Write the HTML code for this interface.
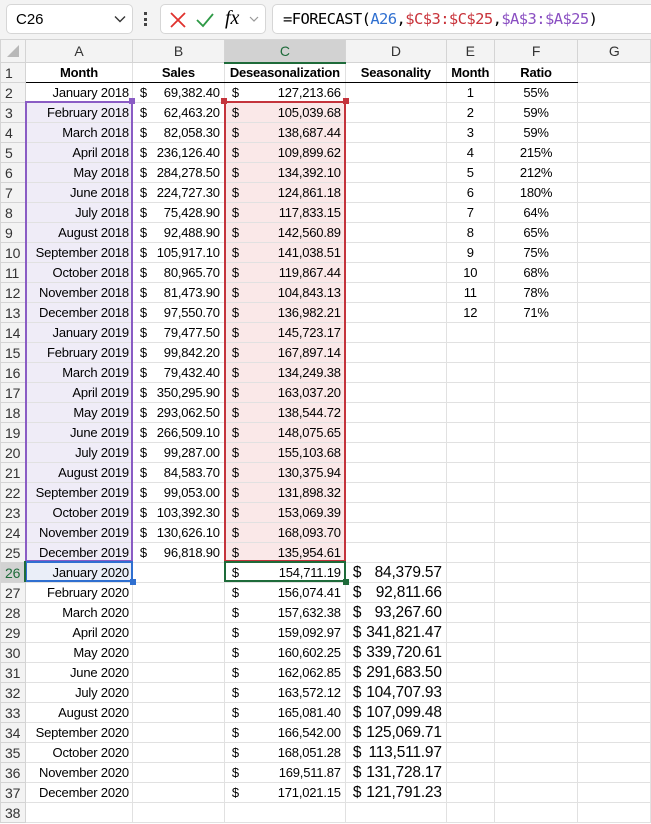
<!DOCTYPE html>
<html><head><meta charset="utf-8"><style>
*{box-sizing:border-box;margin:0;padding:0}
body{width:651px;height:824px;background:#fff;font-family:"Liberation Sans",sans-serif;font-size:13px;color:#000;position:relative;overflow:hidden}
.top{position:absolute;left:0;top:0;width:651px;height:40px;background:#f3f3f3}
.nb{position:absolute;left:6px;top:4px;width:127px;height:30px;background:#fff;border:1px solid #d6d6d6;border-radius:5px;font-size:15px;padding:6px 0 0 9px}
.ib{position:absolute;left:128px;top:4px;width:85px;height:30px;background:#fff;border:1px solid #d6d6d6;border-radius:5px}
.fb{position:absolute;left:218px;top:4px;width:440px;height:30px;background:#fff;border:1px solid #d6d6d6;border-radius:5px;font-family:"DejaVu Sans Mono","Liberation Mono",monospace;font-size:15.5px;padding:5px 0 0 10px;letter-spacing:-0.6px;white-space:nowrap}
table{position:absolute;left:0;top:39px;border-collapse:collapse;table-layout:fixed}
td{height:20px;border:1px solid #e1e1e1;padding:0 3px;white-space:nowrap;overflow:hidden;line-height:18px;letter-spacing:-0.2px}
tr.h td{height:22px;background:#f3f3f3;text-align:center;font-size:14px;color:#333;border-color:#d4d4d4}
td.r{background:#f3f3f3;font-size:14px;color:#333;text-align:left;padding-left:4px;border-color:#d4d4d4}
.a{text-align:right}
.c{text-align:center}
b{font-weight:bold}
.m{display:flex;justify-content:space-between;padding:0 1px 0 4px}
.d{font-size:15.5px}
.pa{background:#efecf7}
.pc{background:#fae8e8}
</style></head><body>
<div class="top">
<div class="nb">C26<svg style="position:absolute;right:6px;top:10px" width="12" height="8"><path d="M1 1.5 L6 6.5 L11 1.5" stroke="#333" fill="none" stroke-width="1.4"/></svg></div>
<div style="position:absolute;left:144px;top:12px;width:3px;height:16px"><div style="width:3px;height:3px;background:#444;margin-bottom:2.5px"></div><div style="width:3px;height:3px;background:#444;margin-bottom:2.5px"></div><div style="width:3px;height:3px;background:#444"></div></div>
<div class="ib" style="left:160px;width:106px">
<svg style="position:absolute;left:8px;top:6px" width="18" height="18"><path d="M2 2L16 16M16 2L2 16" stroke="#e0312d" stroke-width="1.8"/></svg>
<svg style="position:absolute;left:34px;top:6px" width="20" height="18"><path d="M2 9L8 15L18 3" stroke="#2e9a46" stroke-width="1.8" fill="none"/></svg>
<span style="position:absolute;left:64px;top:2px;font-family:'Liberation Serif',serif;font-style:italic;font-size:20px">fx</span>
<svg style="position:absolute;left:88px;top:11px" width="10" height="7"><path d="M1 1L5 5L9 1" stroke="#999" fill="none" stroke-width="1.2"/></svg>
</div>
<div class="fb" style="left:272px">=FORECAST(<span style="color:#2f6fd0">A26</span>,<span style="color:#c8323a">$C$3:$C$25</span>,<span style="color:#8a4fc2">$A$3:$A$25</span>)</div>
</div>
<table>
<colgroup><col style="width:25px"><col style="width:107px"><col style="width:92px"><col style="width:121px"><col style="width:101px"><col style="width:48px"><col style="width:84px"><col style="width:73px"></colgroup>
<tr class="h"><td style="background:#f3f3f3"><svg width="14" height="14" style="margin-top:4px"><path d="M13 1L13 13L1 13Z" fill="#b8b8b8"/></svg></td><td>A</td><td>B</td><td style="background:#d2d2d2;color:#1e6b3a;border-bottom:2px solid #1e6b3a">C</td><td>D</td><td>E</td><td>F</td><td>G</td></tr>
<tr><td class="r">1</td><td class="c" style="border-bottom:1px solid #000"><b>Month</b></td><td class="c" style="border-bottom:1px solid #000"><b>Sales</b></td><td class="c" style="border-bottom:1px solid #000"><b>Deseasonalization</b></td><td class="c" style="border-bottom:1px solid #000"><b>Seasonality</b></td><td class="c" style="border-bottom:1px solid #000"><b>Month</b></td><td class="c" style="border-bottom:1px solid #000"><b>Ratio</b></td><td></td></tr>
<tr><td class="r">2</td><td class="a">January 2018</td><td><div class="m"><span>$</span><span>69,382.40</span></div></td><td><div class="m"><span>$</span><span>127,213.66</span></div></td><td></td><td class="c">1</td><td class="c">55%</td><td></td></tr>
<tr><td class="r">3</td><td class="a pa">February 2018</td><td><div class="m"><span>$</span><span>62,463.20</span></div></td><td class="pc"><div class="m"><span>$</span><span>105,039.68</span></div></td><td></td><td class="c">2</td><td class="c">59%</td><td></td></tr>
<tr><td class="r">4</td><td class="a pa">March 2018</td><td><div class="m"><span>$</span><span>82,058.30</span></div></td><td class="pc"><div class="m"><span>$</span><span>138,687.44</span></div></td><td></td><td class="c">3</td><td class="c">59%</td><td></td></tr>
<tr><td class="r">5</td><td class="a pa">April 2018</td><td><div class="m"><span>$</span><span>236,126.40</span></div></td><td class="pc"><div class="m"><span>$</span><span>109,899.62</span></div></td><td></td><td class="c">4</td><td class="c">215%</td><td></td></tr>
<tr><td class="r">6</td><td class="a pa">May 2018</td><td><div class="m"><span>$</span><span>284,278.50</span></div></td><td class="pc"><div class="m"><span>$</span><span>134,392.10</span></div></td><td></td><td class="c">5</td><td class="c">212%</td><td></td></tr>
<tr><td class="r">7</td><td class="a pa">June 2018</td><td><div class="m"><span>$</span><span>224,727.30</span></div></td><td class="pc"><div class="m"><span>$</span><span>124,861.18</span></div></td><td></td><td class="c">6</td><td class="c">180%</td><td></td></tr>
<tr><td class="r">8</td><td class="a pa">July 2018</td><td><div class="m"><span>$</span><span>75,428.90</span></div></td><td class="pc"><div class="m"><span>$</span><span>117,833.15</span></div></td><td></td><td class="c">7</td><td class="c">64%</td><td></td></tr>
<tr><td class="r">9</td><td class="a pa">August 2018</td><td><div class="m"><span>$</span><span>92,488.90</span></div></td><td class="pc"><div class="m"><span>$</span><span>142,560.89</span></div></td><td></td><td class="c">8</td><td class="c">65%</td><td></td></tr>
<tr><td class="r">10</td><td class="a pa">September 2018</td><td><div class="m"><span>$</span><span>105,917.10</span></div></td><td class="pc"><div class="m"><span>$</span><span>141,038.51</span></div></td><td></td><td class="c">9</td><td class="c">75%</td><td></td></tr>
<tr><td class="r">11</td><td class="a pa">October 2018</td><td><div class="m"><span>$</span><span>80,965.70</span></div></td><td class="pc"><div class="m"><span>$</span><span>119,867.44</span></div></td><td></td><td class="c">10</td><td class="c">68%</td><td></td></tr>
<tr><td class="r">12</td><td class="a pa">November 2018</td><td><div class="m"><span>$</span><span>81,473.90</span></div></td><td class="pc"><div class="m"><span>$</span><span>104,843.13</span></div></td><td></td><td class="c">11</td><td class="c">78%</td><td></td></tr>
<tr><td class="r">13</td><td class="a pa">December 2018</td><td><div class="m"><span>$</span><span>97,550.70</span></div></td><td class="pc"><div class="m"><span>$</span><span>136,982.21</span></div></td><td></td><td class="c">12</td><td class="c">71%</td><td></td></tr>
<tr><td class="r">14</td><td class="a pa">January 2019</td><td><div class="m"><span>$</span><span>79,477.50</span></div></td><td class="pc"><div class="m"><span>$</span><span>145,723.17</span></div></td><td></td><td></td><td></td><td></td></tr>
<tr><td class="r">15</td><td class="a pa">February 2019</td><td><div class="m"><span>$</span><span>99,842.20</span></div></td><td class="pc"><div class="m"><span>$</span><span>167,897.14</span></div></td><td></td><td></td><td></td><td></td></tr>
<tr><td class="r">16</td><td class="a pa">March 2019</td><td><div class="m"><span>$</span><span>79,432.40</span></div></td><td class="pc"><div class="m"><span>$</span><span>134,249.38</span></div></td><td></td><td></td><td></td><td></td></tr>
<tr><td class="r">17</td><td class="a pa">April 2019</td><td><div class="m"><span>$</span><span>350,295.90</span></div></td><td class="pc"><div class="m"><span>$</span><span>163,037.20</span></div></td><td></td><td></td><td></td><td></td></tr>
<tr><td class="r">18</td><td class="a pa">May 2019</td><td><div class="m"><span>$</span><span>293,062.50</span></div></td><td class="pc"><div class="m"><span>$</span><span>138,544.72</span></div></td><td></td><td></td><td></td><td></td></tr>
<tr><td class="r">19</td><td class="a pa">June 2019</td><td><div class="m"><span>$</span><span>266,509.10</span></div></td><td class="pc"><div class="m"><span>$</span><span>148,075.65</span></div></td><td></td><td></td><td></td><td></td></tr>
<tr><td class="r">20</td><td class="a pa">July 2019</td><td><div class="m"><span>$</span><span>99,287.00</span></div></td><td class="pc"><div class="m"><span>$</span><span>155,103.68</span></div></td><td></td><td></td><td></td><td></td></tr>
<tr><td class="r">21</td><td class="a pa">August 2019</td><td><div class="m"><span>$</span><span>84,583.70</span></div></td><td class="pc"><div class="m"><span>$</span><span>130,375.94</span></div></td><td></td><td></td><td></td><td></td></tr>
<tr><td class="r">22</td><td class="a pa">September 2019</td><td><div class="m"><span>$</span><span>99,053.00</span></div></td><td class="pc"><div class="m"><span>$</span><span>131,898.32</span></div></td><td></td><td></td><td></td><td></td></tr>
<tr><td class="r">23</td><td class="a pa">October 2019</td><td><div class="m"><span>$</span><span>103,392.30</span></div></td><td class="pc"><div class="m"><span>$</span><span>153,069.39</span></div></td><td></td><td></td><td></td><td></td></tr>
<tr><td class="r">24</td><td class="a pa">November 2019</td><td><div class="m"><span>$</span><span>130,626.10</span></div></td><td class="pc"><div class="m"><span>$</span><span>168,093.70</span></div></td><td></td><td></td><td></td><td></td></tr>
<tr><td class="r">25</td><td class="a pa">December 2019</td><td><div class="m"><span>$</span><span>96,818.90</span></div></td><td class="pc"><div class="m"><span>$</span><span>135,954.61</span></div></td><td></td><td></td><td></td><td></td></tr>
<tr><td class="r" style="background:#d2d2d2;color:#1e6b3a">26</td><td class="a" style="background:#eaeef8">January 2020</td><td></td><td><div class="m"><span>$</span><span>154,711.19</span></div></td><td class="d"><div class="m"><span>$</span><span>84,379.57</span></div></td><td></td><td></td><td></td></tr>
<tr><td class="r">27</td><td class="a">February 2020</td><td></td><td><div class="m"><span>$</span><span>156,074.41</span></div></td><td class="d"><div class="m"><span>$</span><span>92,811.66</span></div></td><td></td><td></td><td></td></tr>
<tr><td class="r">28</td><td class="a">March 2020</td><td></td><td><div class="m"><span>$</span><span>157,632.38</span></div></td><td class="d"><div class="m"><span>$</span><span>93,267.60</span></div></td><td></td><td></td><td></td></tr>
<tr><td class="r">29</td><td class="a">April 2020</td><td></td><td><div class="m"><span>$</span><span>159,092.97</span></div></td><td class="d"><div class="m"><span>$</span><span>341,821.47</span></div></td><td></td><td></td><td></td></tr>
<tr><td class="r">30</td><td class="a">May 2020</td><td></td><td><div class="m"><span>$</span><span>160,602.25</span></div></td><td class="d"><div class="m"><span>$</span><span>339,720.61</span></div></td><td></td><td></td><td></td></tr>
<tr><td class="r">31</td><td class="a">June 2020</td><td></td><td><div class="m"><span>$</span><span>162,062.85</span></div></td><td class="d"><div class="m"><span>$</span><span>291,683.50</span></div></td><td></td><td></td><td></td></tr>
<tr><td class="r">32</td><td class="a">July 2020</td><td></td><td><div class="m"><span>$</span><span>163,572.12</span></div></td><td class="d"><div class="m"><span>$</span><span>104,707.93</span></div></td><td></td><td></td><td></td></tr>
<tr><td class="r">33</td><td class="a">August 2020</td><td></td><td><div class="m"><span>$</span><span>165,081.40</span></div></td><td class="d"><div class="m"><span>$</span><span>107,099.48</span></div></td><td></td><td></td><td></td></tr>
<tr><td class="r">34</td><td class="a">September 2020</td><td></td><td><div class="m"><span>$</span><span>166,542.00</span></div></td><td class="d"><div class="m"><span>$</span><span>125,069.71</span></div></td><td></td><td></td><td></td></tr>
<tr><td class="r">35</td><td class="a">October 2020</td><td></td><td><div class="m"><span>$</span><span>168,051.28</span></div></td><td class="d"><div class="m"><span>$</span><span>113,511.97</span></div></td><td></td><td></td><td></td></tr>
<tr><td class="r">36</td><td class="a">November 2020</td><td></td><td><div class="m"><span>$</span><span>169,511.87</span></div></td><td class="d"><div class="m"><span>$</span><span>131,728.17</span></div></td><td></td><td></td><td></td></tr>
<tr><td class="r">37</td><td class="a">December 2020</td><td></td><td><div class="m"><span>$</span><span>171,021.15</span></div></td><td class="d"><div class="m"><span>$</span><span>121,791.23</span></div></td><td></td><td></td><td></td></tr>
<tr><td class="r">38</td><td></td><td></td><td></td><td></td><td></td><td></td><td></td></tr>
</table>
<div style="position:absolute;left:25px;top:101px;width:108px;height:461px;border:2px solid #8a5cc4"></div>
<div style="position:absolute;left:129px;top:98px;width:6px;height:6px;background:#8a5cc4"></div>
<div style="position:absolute;left:224px;top:101px;width:122px;height:461px;border:2px solid #c4343c"></div>
<div style="position:absolute;left:221px;top:98px;width:6px;height:6px;background:#c4343c"></div>
<div style="position:absolute;left:343px;top:98px;width:6px;height:6px;background:#c4343c"></div>
<div style="position:absolute;left:25px;top:561px;width:108px;height:21px;border:2px solid #2f6fd0"></div>
<div style="position:absolute;left:130px;top:579px;width:6px;height:6px;background:#2f6fd0"></div>
<div style="position:absolute;left:224px;top:561px;width:122px;height:21px;border:2px solid #1e6b3a"></div>
<div style="position:absolute;left:343px;top:579px;width:6px;height:6px;background:#1e6b3a"></div>
<div style="position:absolute;left:24px;top:561px;width:2px;height:21px;background:#1e6b3a"></div>
</body></html>
